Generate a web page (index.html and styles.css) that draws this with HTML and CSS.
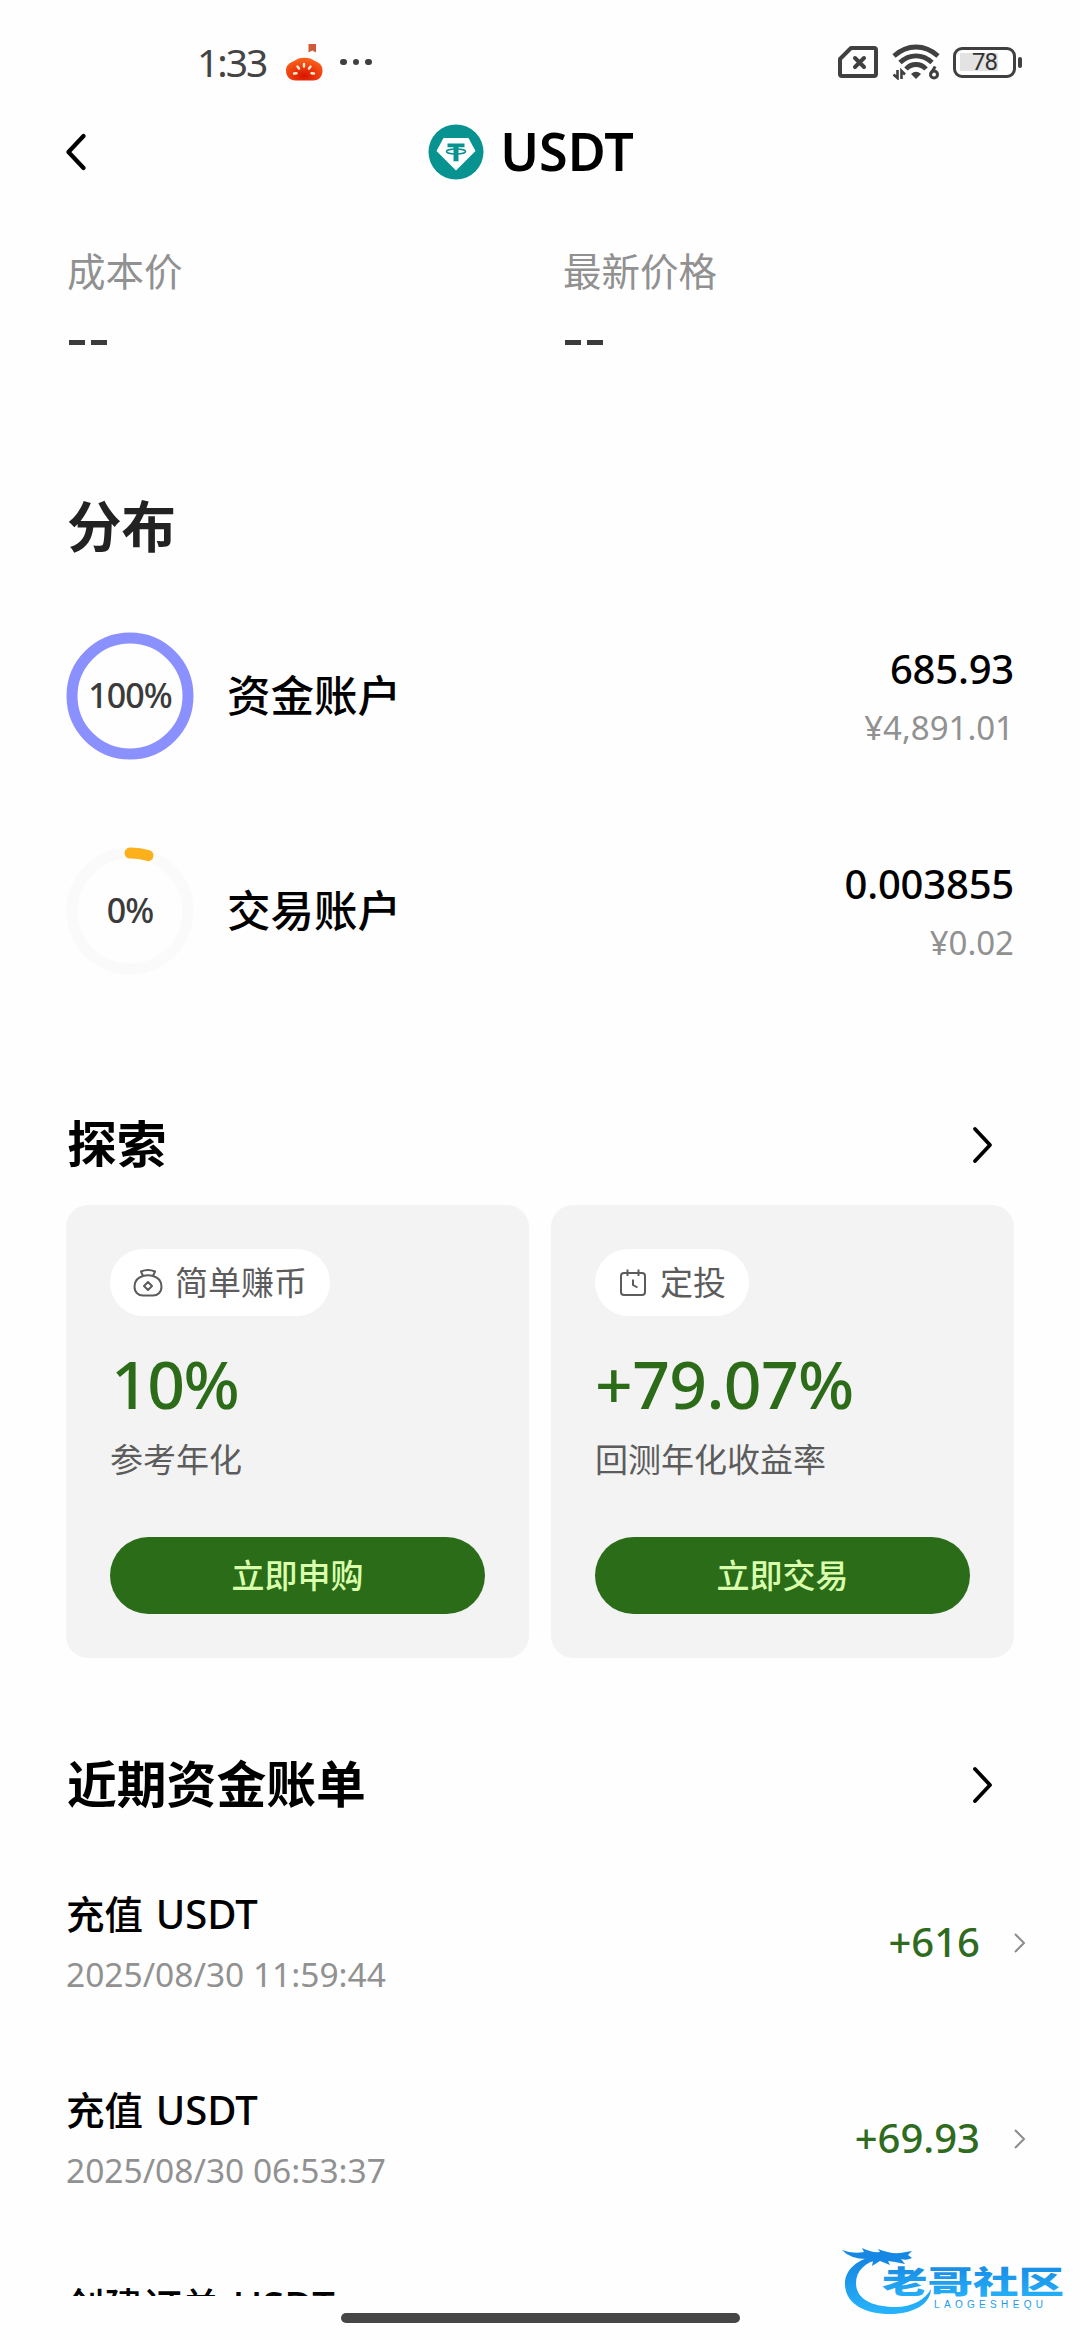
FILE: index.html
```html
<!DOCTYPE html>
<html lang="zh-CN">
<head>
<meta charset="utf-8">
<title>USDT</title>
<link rel="stylesheet" href="styles.css">
</head>
<body>
<div class="screen">
  <header class="status">
    <div class="status-left">
      <span class="clock">1:33</span>
      <svg class="tomato" width="38" height="38" viewBox="0 0 38 38">
        <defs><radialGradient id="tom" cx=".5" cy=".8" r=".7"><stop offset="0" stop-color="#d81400"/><stop offset="1" stop-color="#fb5d1c"/></radialGradient></defs>
        <path d="M23.500 1H31v8.500l-3.700-2-3.800 2z" fill="#d05a38"/>
        <path d="M9 18C14 13.500 25 13.500 30 18c5 2 7.500 4.500 7.500 9.500 0 6-3.500 10-9 10h-18C5 37.500 1 33.500 1 27.500 1 22.500 4 20 9 18z" fill="url(#tom)"/>
        <g stroke="#fff0d0" stroke-width="2.400" stroke-linecap="round"><path d="M19 21v2.500M12.500 23.500l1.500 2M25.500 23.500l-1.500 2M9 30.500l2.500-.3M29 30.500l-2.500-.3"/></g>
      </svg>
      <span class="dots"><i></i><i></i><i></i></span>
    </div>
    <div class="status-right">
      <svg width="40" height="32" viewBox="0 0 40 32" fill="none" stroke="#404040" stroke-width="4" stroke-linejoin="round" stroke-linecap="round"><path d="M13 2h23q2 0 2 2v24q0 2-2 2H4q-2 0-2-2V13z"/><path d="M17 12l9 9M26 12l-9 9"/></svg>
      <svg class="wifi" width="48" height="36" viewBox="0 0 48 36"><g fill="none" stroke="#404040" stroke-width="4.800"><path d="M2 12Q12 3 24 3t22 9"/><path d="M8 18.500Q15 11.800 24 11.800T40 18.500"/><path d="M14 25Q18 20.500 24 20.500T34 25"/></g><path d="M19 30q5-4.500 10 0l-5 5z" fill="#404040"/><path d="M1.500 30.500L5.500 34v-8M9.500 35v-8l3.500 3.500" stroke="#404040" stroke-width="2.600" fill="none"/><circle cx="42" cy="30.500" r="3.500" fill="none" stroke="#404040" stroke-width="3"/><path d="M39.200 29l4-6.500" stroke="#404040" stroke-width="3"/></svg>
      <div class="battery"><span>78</span></div><i class="nub"></i>
    </div>
  </header>

  <nav class="titlebar">
    <svg class="back" width="22" height="38" viewBox="0 0 22 38"><path d="M17.500 3L2.500 19l15 16" fill="none" stroke="#000" stroke-width="4.200" stroke-linecap="round" stroke-linejoin="round"/></svg>
    <div class="coin">
      <svg width="56" height="56" viewBox="0 0 56 56"><circle cx="28" cy="28" r="27.500" fill="#089390"/><path d="M15.500 14h25l7 13L28 46.500 8.500 27z" fill="#fff"/><path d="M19.500 19.500h17v3.700h-6v14h-5v-14h-6z" fill="#089390"/><ellipse cx="28" cy="27.500" rx="9.500" ry="2.500" fill="none" stroke="#089390" stroke-width="1.600"/></svg>
      <h1>USDT</h1>
    </div>
  </nav>

  <section class="prices">
    <div><div class="label">成本价</div><div class="dash"><i></i><i></i></div></div>
    <div><div class="label">最新价格</div><div class="dash"><i></i><i></i></div></div>
  </section>

  <h2 class="dist-title">分布</h2>
  <section class="accounts">
    <div class="account">
      <div class="ring"><svg width="128" height="128" viewBox="0 0 128 128"><circle cx="64" cy="64" r="58" fill="none" stroke="#8b90ff" stroke-width="11"/></svg><span class="pct">100%</span></div>
      <div class="name">资金账户</div>
      <div class="value"><div class="amount">685.93</div><div class="fiat">¥4,891.01</div></div>
    </div>
    <div class="account">
      <div class="ring"><svg width="128" height="128" viewBox="0 0 128 128"><circle cx="64" cy="64" r="58" fill="none" stroke="#fafafa" stroke-width="11"/><path d="M64 6A58 58 0 0 1 82 8.600" fill="none" stroke="#fbb01c" stroke-width="11" stroke-linecap="round"/></svg><span class="pct">0%</span></div>
      <div class="name">交易账户</div>
      <div class="value"><div class="amount">0.003855</div><div class="fiat">¥0.02</div></div>
    </div>
  </section>

  <div class="section-head explore"><h3>探索</h3><svg width="22" height="38" viewBox="0 0 22 38"><path d="M4 3l15 16L4 35" fill="none" stroke="#000" stroke-width="3.800" stroke-linecap="round" stroke-linejoin="round"/></svg></div>
  <section class="cards">
    <article class="card">
      <div class="pill"><svg width="30" height="30" viewBox="0 0 30 30" fill="none" stroke="#5c5c5c" stroke-width="2" stroke-linejoin="round"><path d="M10 8L8 3.500Q15 .5 22 3.500L20 8Q15 6.500 10 8z"/><path d="M10 8C4.500 9.500 1.500 13 1.500 18.500c0 6 4 9 8.500 9h10c4.500 0 8.500-3 8.500-9C28.500 13 25.500 9.500 20 8"/><path d="M15 14l4 4-4 4-4-4z"/></svg><span>简单赚币</span></div>
      <div class="rate ten">10%</div>
      <div class="desc">参考年化</div>
      <button>立即申购</button>
    </article>
    <article class="card">
      <div class="pill"><svg width="30" height="30" viewBox="0 0 30 30" fill="none" stroke="#5c5c5c" stroke-width="2"><rect x="3" y="5" width="24" height="22" rx="3"/><path d="M9.500 1.500v6.500M20.500 1.500v6.500M15 11.500v5.500l4.500 2.500"/></svg><span>定投</span></div>
      <div class="rate">+79.07%</div>
      <div class="desc">回测年化收益率</div>
      <button>立即交易</button>
    </article>
  </section>

  <div class="section-head bills-head"><h3>近期资金账单</h3><svg width="22" height="38" viewBox="0 0 22 38"><path d="M4 3l15 16L4 35" fill="none" stroke="#000" stroke-width="3.800" stroke-linecap="round" stroke-linejoin="round"/></svg></div>
  <section class="bills">
    <div class="bill"><div><div class="kind">充值 <b>USDT</b></div><div class="time">2025/08/30 11:59:44</div></div><div class="delta">+616</div><svg width="12" height="20" viewBox="0 0 12 20"><path d="M1 1l9 9-9 9" fill="none" stroke="#8c8c8c" stroke-width="2"/></svg></div>
    <div class="bill"><div><div class="kind">充值 <b>USDT</b></div><div class="time">2025/08/30 06:53:37</div></div><div class="delta">+69.93</div><svg width="12" height="20" viewBox="0 0 12 20"><path d="M1 1l9 9-9 9" fill="none" stroke="#8c8c8c" stroke-width="2"/></svg></div>
    <div class="bill"><div><div class="kind">创建订单 <b>USDT</b></div></div></div>
  </section>
  <footer class="home"><i></i></footer>

  <div class="watermark">
    <svg width="226" height="74" viewBox="0 0 226 74">
      <defs><linearGradient id="wm" x1="0" y1="0" x2="0" y2="1"><stop offset="0" stop-color="#1583df"/><stop offset="1" stop-color="#27b4fb"/></linearGradient></defs>
      <path d="M36 10C14 14 2 26 3 40c1 20 22 30 48 29 20-1 37-9 38-25-6 11-20 19-39 18C28 61 14 53 14 38 14 26 23 17 38 14z" fill="url(#wm)"/>
      <path d="M0 5q10 4 22 2l-2-4q10 5 18 4l-2-3q12 5 22 4l12-2-4 4 4 3q-6 3-11 1l4 5-10-2-7-1 2 4-10-4-8 5 1-5-11 3 5-5Q8 14 0 5z" fill="#1687e2"/>
      <g fill="url(#wm)"><text class="wm-name" x="40" y="48" textLength="182" lengthAdjust="spacingAndGlyphs">老哥社区</text><text class="wm-sub" x="92" y="63" textLength="109">LAOGESHEQU</text></g>
    </svg>
  </div>
</div>
</body>
</html>
```

FILE: styles.css
```css
* { box-sizing: border-box; margin: 0; padding: 0; }
body { width: 1080px; height: 2340px; background: #fefefe; overflow: hidden; font-family: "Noto Sans", "Noto Sans CJK SC", sans-serif; color: #000; }
svg { display: block; flex: none; }
i { display: block; }
.screen { position: relative; width: 1080px; height: 2340px; display: flex; flex-direction: column; overflow: hidden; }

.status { height: 104px; padding: 20px 58px 0 197px; display: flex; justify-content: space-between; align-items: center; }
.status-left, .status-right { display: flex; align-items: center; }
.clock { font-size: 39px; line-height: 40px; color: #444; letter-spacing: -2px; width: 71px; }
.tomato { margin: 0 0 0 17px; }
.dots { display: flex; gap: 6px; margin-left: 17px; }
.dots i { width: 6.500px; height: 6.500px; border-radius: 50%; background: #404040; }
.wifi { margin: 0 13px 0 14px; }
.battery { width: 63px; height: 31px; border: 3.500px solid #404040; border-radius: 9px; background: linear-gradient(#e3e3e3, #e3e3e3) 4px 3px / 38px 18px no-repeat; display: grid; place-items: center; }
.battery span { font: 400 24px/24px Roboto, sans-serif; color: #333; letter-spacing: -1px; }
.nub { width: 4px; height: 11px; background: #404040; border-radius: 2px; margin-left: 2px; }

.titlebar { height: 96px; display: grid; grid-template-columns: 1fr auto 1fr; align-items: center; padding: 0 66px; }
.coin { display: flex; align-items: center; gap: 16px; margin-right: 18px; }
h1 { font-size: 52px; line-height: 54px; font-weight: 600; padding-bottom: 2px; }

.prices { height: 265px; display: grid; grid-template-columns: 496px 1fr; padding: 45px 0 0 67px; }
.label { font-size: 38.500px; line-height: 48px; color: #919191; font-family: "Noto Sans CJK SC", sans-serif; }
.dash { display: flex; gap: 6px; padding: 47px 0 0 2px; }
.dash i { width: 16px; height: 5px; background: #3b3b3b; }

.dist-title { height: 123px; padding-left: 67px; font: 600 54.500px/118px "Noto Sans CJK SC", sans-serif; color: #222; }
.accounts { padding: 44px 66px 0; height: 471px; }
.account { height: 127px; margin-bottom: 88px; display: flex; align-items: center; }
.ring { width: 128px; height: 128px; display: grid; place-items: center; }
.ring > * { grid-area: 1 / 1; }
.pct { font-size: 34px; font-weight: 500; color: #3b3b3b; letter-spacing: -1px; padding-bottom: 2px; }
.name { margin-left: 33px; padding-bottom: 4px; font: 500 43.500px/60px "Noto Sans CJK SC", sans-serif; }
.value { margin-left: auto; text-align: right; padding-top: 7px; }
.amount { font-size: 40px; line-height: 56px; font-weight: 500; letter-spacing: -.2px; }
.fiat { font-size: 33px; line-height: 61px; color: #919191; }

.section-head { display: flex; align-items: center; justify-content: space-between; padding: 0 87px 0 67px; }
.section-head h3 { font: 700 49.800px/64px "Noto Sans CJK SC", sans-serif; padding-bottom: 8px; }
.explore { height: 118px; padding-top: 54px; }
.cards { display: grid; grid-template-columns: 1fr 1fr; gap: 22px; padding: 0 66px; height: 453px; margin-top: 28px; }
.card { background: #f3f3f3; border-radius: 22px; padding: 44px; display: flex; flex-direction: column; align-items: flex-start; }
.pill { height: 67px; border-radius: 34px; background: #fff; display: flex; align-items: center; gap: 12px; padding: 0 23px; }
.pill span, .desc { font: 400 33px/44px "Noto Sans CJK SC", sans-serif; color: #5c5c5c; }
.pill span { padding-bottom: 3px; }
.rate { font-size: 66px; line-height: 68px; margin-top: 33px; font-weight: 500; color: #2c6c19; letter-spacing: -.6px; }
.ten { letter-spacing: -1.500px; padding-left: 1px; }
.desc { margin-top: 19px; }
.card button { margin-top: auto; width: 100%; height: 77px; border: 0; border-radius: 39px; background: #2b6c18; color: #d9ffac; font: 500 33px/74px "Noto Sans CJK SC", sans-serif; padding-bottom: 3px; }

.bills-head { height: 64px; margin-top: 95px; }
.bills { height: 479px; overflow: hidden; padding: 71px 54px 0 66px; }
.bill { height: 196px; display: flex; align-items: flex-start; }
.kind { font: 500 38.500px/48px "Noto Sans CJK SC", sans-serif; white-space: pre; }
.kind b { font: 500 40px/48px "Noto Sans", sans-serif; margin-left: 4px; }
.time { font-size: 33.500px; line-height: 48px; color: #919191; margin-top: 12px; }
.delta { margin-left: auto; font-size: 40px; line-height: 56px; padding-top: 26px; font-weight: 500; color: #2f6b1f; }
.bill svg { margin: 45px 0 0 34px; }
.home { display: flex; justify-content: center; padding-top: 17px; }
.home i { width: 399px; height: 10px; border-radius: 5px; background: #464646; }

.watermark { position: absolute; left: 842px; top: 2245px; }
.wm-name { font: 900 31px "Noto Sans CJK SC", sans-serif; }
.wm-sub { font: 400 10px "Liberation Sans", sans-serif; }
```
